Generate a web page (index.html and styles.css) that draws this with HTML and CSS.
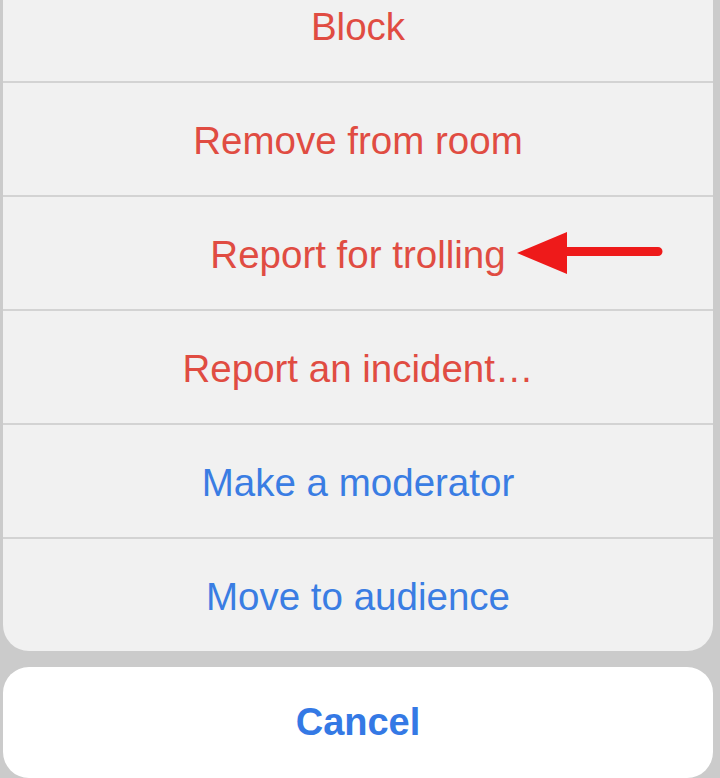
FILE: index.html
```html
<!DOCTYPE html>
<html>
<head>
<meta charset="utf-8">
<link rel="stylesheet" href="styles.css">
</head>
<body>
<div class="screen">
  <div class="sheet">
    <div class="row destructive">Block</div>
    <div class="row destructive">Remove from room</div>
    <div class="row destructive marked">
      <span>Report for trolling</span>
      <svg class="arrow" width="150" height="46" viewBox="0 0 150 46">
        <path d="M0 21 L50 0 L50 15 L141 15 A4.5 4.5 0 0 1 141 24 L50 24 L50 42 Z" fill="#ee1a1a"/>
      </svg>
    </div>
    <div class="row destructive">Report an incident…</div>
    <div class="row action">Make a moderator</div>
    <div class="row action last">Move to audience</div>
  </div>
  <div class="cancel">Cancel</div>
</div>
</body>
</html>
```
FILE: styles.css
```css
html, body {
  margin: 0;
  padding: 0;
  background: #cbcbcb;
  overflow: hidden;
}
.screen {
  width: 720px;
  height: 778px;
  padding: 0 7px 0 3px;
  box-sizing: border-box;
  display: flex;
  flex-direction: column;
  gap: 16px;
  font-family: "Liberation Sans", Arial, sans-serif;
}
.sheet {
  margin-top: -31px;
  background: #f1f1f1;
  border-radius: 0 0 26px 26px;
  display: flex;
  flex-direction: column;
}
.row {
  height: 108px;
  padding-top: 4px;
  box-sizing: content-box;
  border-bottom: 2px solid #d3d3d3;
  display: flex;
  align-items: center;
  justify-content: center;
  font-size: 38.5px;
  line-height: 1;
  position: relative;
}
.row.last {
  border-bottom: none;
}
.destructive {
  color: #e04c42;
}
.action {
  color: #3a7de3;
}
.arrow {
  position: absolute;
  left: 514px;
  top: 35px;
}
.cancel {
  height: 113px;
  background: #ffffff;
  border-radius: 26px;
  display: flex;
  align-items: center;
  justify-content: center;
  color: #3479e5;
  font-size: 38px;
  font-weight: bold;
}
```
